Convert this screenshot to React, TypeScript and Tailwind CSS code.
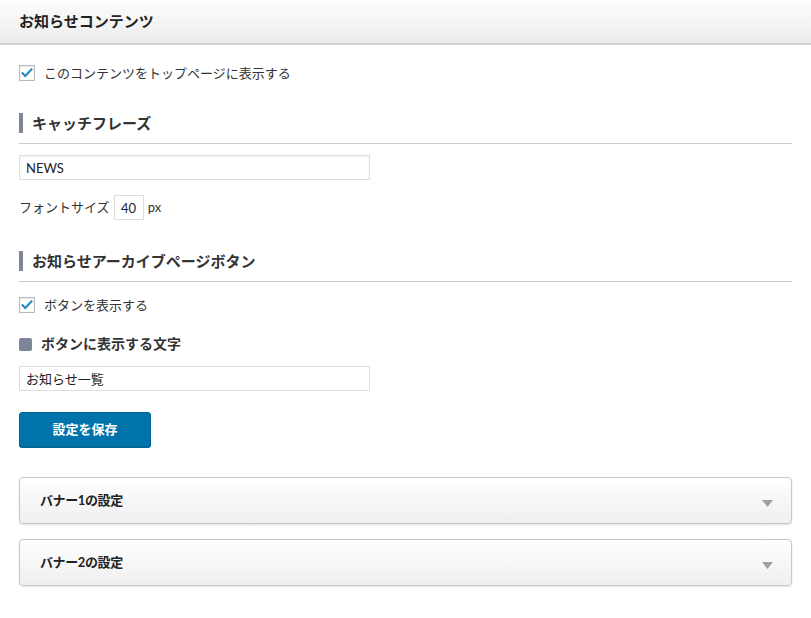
const font = "font-['Lato','Noto_Sans_CJK_JP',sans-serif]";

const Checkbox = () => (
    <span className="flex h-4 w-4 shrink-0 items-center justify-center border border-[#b4b9be] bg-white shadow-[inset_0_1px_2px_rgba(0,0,0,0.1)]">
        <svg viewBox="0 0 16 16" className="h-[14px] w-[14px]">
            <path d="M3 8.2l3 3.1L13 4" fill="none" stroke="#1e8cbe" strokeWidth="2.4" strokeLinecap="square" />
        </svg>
    </span>
);

const SectionHeading = ({ label, className }: { label: string; className?: string }) => (
    <div className={`flex h-[31px] items-start gap-[9px] border-b border-[#cccccc] ${className ?? ""}`}>
        <span className="h-[20px] w-[4px] bg-[#7d8599]" />
        <span className="text-[15px] font-bold leading-[20px] text-[#333]">{label}</span>
    </div>
);

const Accordion = ({ label, className }: { label: string; className?: string }) => (
    <div
        className={`flex h-[47px] items-center justify-between rounded-[4px] border border-[#c8c8c8] bg-gradient-to-b from-white to-[#efefef] pl-[20px] pr-[18px] shadow-[0_1px_2px_rgba(0,0,0,0.12)] ${className ?? ""}`}
    >
        <span className="text-[13px] font-bold leading-none tracking-[-0.03em] text-[#222]">{label}</span>
        <svg viewBox="0 0 11 7" className="mt-[6px] h-[7px] w-[11px]">
            <path d="M0 0h11L5.5 7z" fill="#a0a0a0" />
        </svg>
    </div>
);

export default function App() {
    return (
        <div className={`${font} min-h-[618px] w-[811px] bg-white text-[#333]`}>
            <div className="flex h-[45px] items-center border-b-2 border-[#d4d4d4] bg-gradient-to-b from-[#fdfdfd] to-[#ececec] pl-[19px]">
                <h1 className="text-[15px] font-bold text-[#222]">お知らせコンテンツ</h1>
            </div>

            <div className="px-[19px]">
                <label className="mt-[20px] flex h-[16px] items-center gap-[9px] text-[13px] leading-none">
                    <Checkbox />
                    <span>このコンテンツをトップページに表示する</span>
                </label>

                <SectionHeading label="キャッチフレーズ" className="mt-[32px]" />

                <input
                    readOnly
                    value="NEWS"
                    className="mt-[11px] block h-[25px] w-[351px] border border-[#dddddd] px-[6px] text-[13px] text-[#222] outline-none shadow-[inset_0_1px_2px_rgba(0,0,0,0.05)]"
                />

                <div className="mt-[15px] flex h-[25px] items-center text-[13px] leading-none">
                    <span>フォントサイズ</span>
                    <input
                        readOnly
                        value="40"
                        className="mx-[4px] h-[25px] w-[30px] border border-[#dddddd] text-center text-[13px] text-[#222] outline-none"
                    />
                    <span>px</span>
                </div>

                <SectionHeading label="お知らせアーカイブページボタン" className="mt-[31px]" />

                <label className="mt-[15px] flex h-[16px] items-center gap-[9px] text-[13px] leading-none">
                    <Checkbox />
                    <span>ボタンを表示する</span>
                </label>

                <div className="mt-[21px] flex h-[20px] items-center gap-[9px]">
                    <span className="h-[13px] w-[13px] rounded-[2px] bg-[#7d8599]" />
                    <span className="text-[14px] font-bold leading-[20px] text-[#333]">ボタンに表示する文字</span>
                </div>

                <input
                    readOnly
                    value="お知らせ一覧"
                    className="mt-[12px] block h-[25px] w-[351px] border border-[#dddddd] px-[6px] text-[13px] text-[#222] outline-none"
                />

                <button className="mt-[21px] flex h-[35px] w-[132px] items-center justify-center rounded-[3px] border border-[#006799] bg-[#0073aa] text-[13px] font-bold text-white shadow-[0_1px_0_#006799]">
                    設定を保存
                </button>

                <Accordion label="バナー1の設定" className="mt-[30px]" />
                <Accordion label="バナー2の設定" className="mt-[15px]" />
            </div>
        </div>
    );
}
